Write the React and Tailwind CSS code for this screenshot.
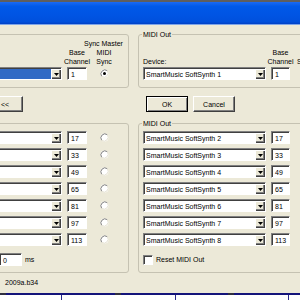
const outRows = [
  ['SmartMusic SoftSynth 2', '17'],
  ['SmartMusic SoftSynth 3', '33'],
  ['SmartMusic SoftSynth 4', '49'],
  ['SmartMusic SoftSynth 5', '65'],
  ['SmartMusic SoftSynth 6', '81'],
  ['SmartMusic SoftSynth 7', '97'],
  ['SmartMusic SoftSynth 8', '113'],
];

// classic sunken edit/combo border
const sunken =
  'border border-t-[#808080] border-l-[#808080] border-r-white border-b-white bg-white shadow-[inset_1px_1px_0_#404040]';

function DropArrow() {
  return (
    <div className="flex h-full w-[10px] shrink-0 items-center justify-center bg-[#ECE9D8] shadow-[inset_1px_1px_0_#fff,inset_-1px_-1px_0_#404040,inset_-2px_-2px_0_#808080]">
      <svg width="5" height="3" viewBox="0 0 5 3">
        <path d="M0 0H5L2.5 3Z" fill="#000" />
      </svg>
    </div>
  );
}

function Combo({ text, selected, className }) {
  return (
    <div className={`flex h-[13px] shrink-0 pl-px pt-px ${sunken} ${className}`}>
      <div
        className={`flex flex-1 items-center overflow-hidden whitespace-nowrap pl-px ${
          selected ? 'bg-[#316AC5] text-white' : ''
        }`}
      >
        {text}
      </div>
      <DropArrow />
    </div>
  );
}

function Field({ value, className }) {
  return (
    <div className={`flex h-[13px] shrink-0 items-center pl-[3px] pt-px ${sunken} ${className}`}>
      {value}
    </div>
  );
}

function Radio({ checked }) {
  return (
    <svg width="9" height="9" viewBox="0 0 9 9">
      <circle cx="4.5" cy="4.5" r="4" fill="#fff" />
      <path d="M1.7 7.3A4 4 0 0 1 7.3 1.7" fill="none" stroke="#808080" strokeWidth="1" />
      <path d="M7.3 1.7A4 4 0 0 1 1.7 7.3" fill="none" stroke="#e4e1d2" strokeWidth="1" />
      {checked && <circle cx="4.5" cy="4.5" r="1.5" fill="#000" />}
    </svg>
  );
}

function Group({ label, className, children }) {
  return (
    <div className={`relative shrink-0 rounded-[3px] border border-[#C5C2B2] ${className}`}>
      {label && (
        <span className="absolute -top-[5px] left-[3px] whitespace-nowrap bg-[#ECE9D8] px-px">
          {label}
        </span>
      )}
      {children}
    </div>
  );
}

export default function App() {
  return (
    <div className="flex h-[300px] w-[300px] flex-col overflow-hidden bg-[#ECE9D8] font-['Liberation_Sans',Arial,sans-serif] text-[7px] leading-[9px] text-black">
      <div className="h-[2px] shrink-0 bg-[#5e5e5e]" />
      <div className="h-[22px] shrink-0 bg-[linear-gradient(to_bottom,#1a6af3,#0059e8_20%,#0054e3_60%,#0050dc_90%,#0040c4)]" />
      <div className="h-px shrink-0 bg-[#7ea5e8]" />

      <div className="flex shrink-0 gap-[9px] pt-[9px]">
        {/* left column, its left edge is cut off */}
        <div className="-ml-[20px] flex w-[149px] shrink-0 flex-col">
          <Group className="h-[54px] px-[6px] pt-[4px]">
            <div className="whitespace-nowrap pl-[97px]">Sync Master</div>
            <div className="flex items-end">
              <div className="w-[80px] shrink-0" />
              <div className="flex w-[20px] shrink-0 flex-col items-center whitespace-nowrap">
                <span>Base</span>
                <span>Channel</span>
              </div>
              <div className="ml-[9px] flex w-[16px] shrink-0 flex-col items-center">
                <span>MIDI</span>
                <span>Sync</span>
              </div>
            </div>
            <div className="mt-px flex items-center">
              <Combo selected className="w-[75px]" />
              <Field value="1" className="ml-[5px] w-[20px]" />
              <div className="ml-[9px] flex w-[16px] justify-center">
                <Radio checked />
              </div>
            </div>
          </Group>

          <div className="ml-[2px] mt-[8px] flex h-[16px] w-[41px] shrink-0 items-center border border-t-white border-l-white border-r-[#404040] border-b-[#404040] pl-[18px] shadow-[inset_-1px_-1px_0_#808080]">
            {'<<'}
          </div>

          <Group className="mt-[11px] h-[150px] px-[6px] pt-[7px]">
            <div className="flex flex-col gap-[4px]">
              {outRows.map(([, ch]) => (
                <div key={ch} className="flex items-center">
                  <Combo className="w-[75px]" />
                  <Field value={ch} className="ml-[5px] w-[20px]" />
                  <div className="ml-[9px] flex w-[16px] justify-center">
                    <Radio />
                  </div>
                </div>
              ))}
            </div>
            <div className="mt-[7px] flex items-center">
              <Field value="0" className="ml-[12px] w-[23px]" />
              <span className="ml-[3px]">ms</span>
            </div>
          </Group>
        </div>

        {/* right column */}
        <div className="flex w-[180px] shrink-0 flex-col">
          <Group label="MIDI Out" className="h-[54px] pl-[4px] pt-[4px]">
            <div className="h-[9px]" />
            <div className="flex items-end whitespace-nowrap">
              <div className="w-[128px] shrink-0">Device:</div>
              <div className="flex w-[19px] shrink-0 flex-col items-center">
                <span>Base</span>
                <span>Channel</span>
              </div>
              <div className="ml-[7px]">Sync</div>
            </div>
            <div className="mt-px flex items-center">
              <Combo text="SmartMusic SoftSynth 1" className="w-[123px]" />
              <Field value="1" className="ml-[5px] w-[19px]" />
            </div>
          </Group>

          <div className="mt-[8px] flex h-[16px] shrink-0 gap-[5px] pl-[8px]">
            <div className="flex w-[42px] items-center justify-center border border-black shadow-[inset_1px_1px_0_#fff,inset_-1px_-1px_0_#808080]">
              OK
            </div>
            <div className="flex w-[42px] items-center justify-center border border-t-white border-l-white border-r-[#404040] border-b-[#404040] shadow-[inset_-1px_-1px_0_#808080]">
              Cancel
            </div>
          </div>

          <Group label="MIDI Out" className="mt-[11px] h-[150px] pl-[4px] pt-[7px]">
            <div className="flex flex-col gap-[4px]">
              {outRows.map(([name, ch]) => (
                <div key={ch} className="flex items-center">
                  <Combo text={name} className="w-[123px]" />
                  <Field value={ch} className="ml-[5px] w-[19px]" />
                </div>
              ))}
            </div>
            <div className="mt-[7px] flex h-[13px] items-center">
              <div className={`h-[10px] w-[10px] shrink-0 ${sunken}`} />
              <span className="ml-[3px] whitespace-nowrap">Reset MIDI Out</span>
            </div>
          </Group>
        </div>
      </div>

      <div className="h-[20px] shrink-0 pl-[5px] pt-[5px]">2009a.b34</div>

      <div className="flex h-[2px] shrink-0 items-center bg-[#14147a]">
        <div className="h-[3px] w-[6px] shrink-0 bg-[#303040]" />
        <div className="ml-[109px] h-[3px] w-[6px] shrink-0 bg-[#303040]" />
        <div className="ml-[107px] h-[3px] w-[6px] shrink-0 bg-[#303040]" />
      </div>
      <div className="flex flex-1 bg-white">
        <div className="w-[62px] shrink-0 border-r border-[#2a2a8a]" />
        <div className="w-[114px] shrink-0 border-r border-[#2a2a8a]" />
        <div className="w-[113px] shrink-0 border-r border-[#2a2a8a]" />
        <div className="flex-1" />
      </div>
    </div>
  );
}
